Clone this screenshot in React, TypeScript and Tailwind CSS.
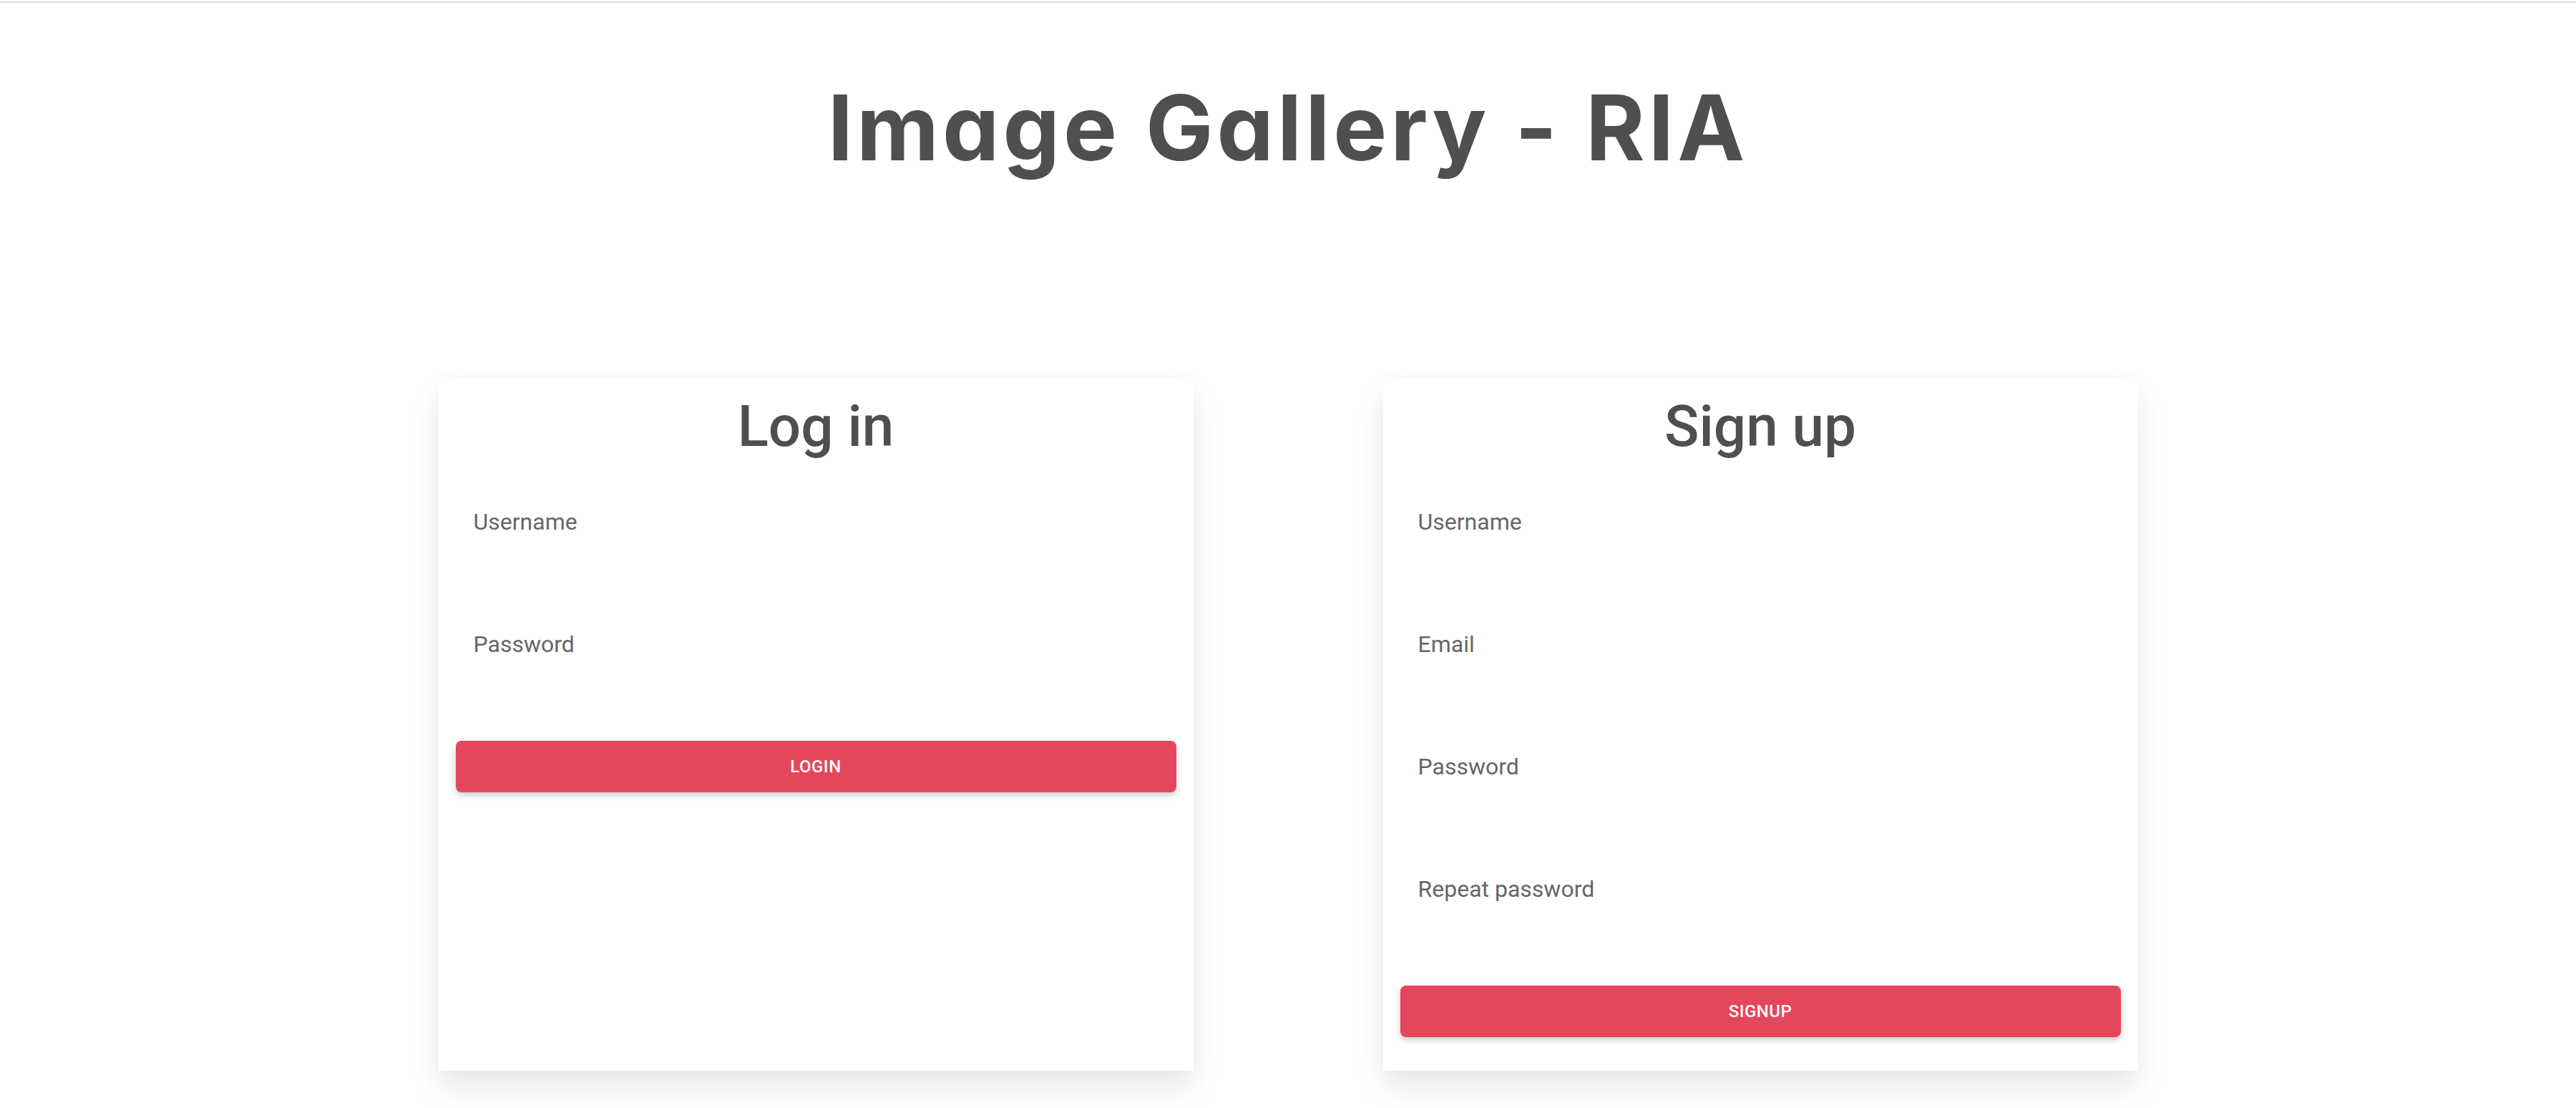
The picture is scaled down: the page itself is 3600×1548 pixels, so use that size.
import React from "react";

function Field({ label, type = "text" }: { label: string; type?: string }) {
  return (
    <div className="flex flex-col">
      <label className="text-[32px] leading-[48px] text-[#666666] font-normal">{label}</label>
      <input
        type={type}
        className="h-[75px] w-full bg-transparent border-0 outline-none text-[32px] text-[#4f4f4f]"
        aria-label={label}
      />
    </div>
  );
}

function Card({ title, fields, button }: { title: string; fields: { label: string; type?: string }[]; button: string }) {
  return (
    <div className="w-[1055px] bg-white flex flex-col pt-[20px] pb-[47px] px-[24px] shadow-[0_24px_40px_rgba(0,0,0,0.09),0_0_24px_rgba(0,0,0,0.02)]">
      <h2 className="text-center text-[80px] leading-[96px] font-medium text-[#4f4f4f]">{title}</h2>
      <div className="mt-[61px] px-[25px] flex flex-col gap-[48px]">
        {fields.map((f) => (
          <Field key={f.label} label={f.label} type={f.type} />
        ))}
      </div>
      <button className="mt-[36px] h-[72px] w-full rounded-[8px] bg-[#e4475b] text-white text-[24px] font-medium uppercase tracking-[0.5px] shadow-[0_4px_8px_rgba(0,0,0,0.2)]">
        {button}
      </button>
    </div>
  );
}

export default function App() {
  return (
    <div className="min-h-screen w-full bg-white font-['Roboto',sans-serif]">
      <div className="pt-[2px]">
        <div className="h-[2px] bg-[#dcdcdc]" />
      </div>
      <h1 className="mt-[99px] text-center text-[126px] leading-[150px] font-bold text-[#4f4f4f] font-['Inter',sans-serif] [font-feature-settings:'cv11'] tracking-[5px]">
        Image Gallery - RIA
      </h1>
      <div className="mt-[275px] flex justify-center items-stretch gap-[265px]">
        <Card
          title="Log in"
          fields={[{ label: "Username" }, { label: "Password", type: "password" }]}
          button="Login"
        />
        <Card
          title="Sign up"
          fields={[
            { label: "Username" },
            { label: "Email", type: "email" },
            { label: "Password", type: "password" },
            { label: "Repeat password", type: "password" },
          ]}
          button="Signup"
        />
      </div>
    </div>
  );
}
